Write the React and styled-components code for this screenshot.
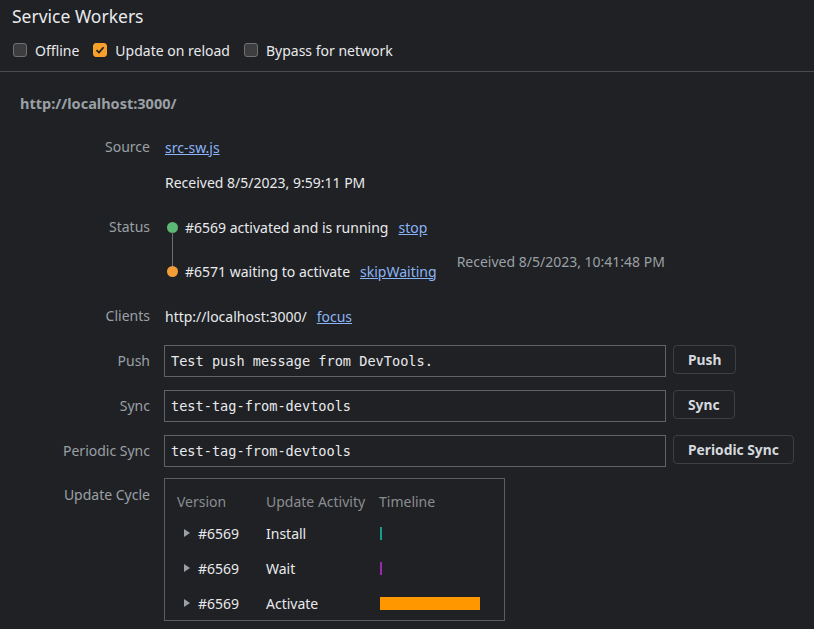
import React from 'react';
import styled, { createGlobalStyle } from 'styled-components';

const Global = createGlobalStyle`
  html, body { margin: 0; padding: 0; background: #202124; }
  body {
    font-family: "Noto Sans", "Open Sans", sans-serif;
    font-size: 14px;
    color: #e8eaed;
  }
  * { box-sizing: border-box; }
`;

const Page = styled.div`
  width: 814px;
  height: 629px;
  overflow: hidden;
  background: #202124;
`;

const Header = styled.header`
  padding: 4px 12px 7px;
`;

const Title = styled.h1`
  margin: 0;
  font-size: 17.5px;
  font-weight: 400;
  line-height: 24px;
  color: #e8eaed;
`;

const Toolbar = styled.div`
  display: flex;
  align-items: center;
  gap: 14px;
  height: 28px;
  margin-top: 8px;
  padding-left: 1px;
`;

const CheckLabel = styled.label`
  display: flex;
  align-items: center;
  gap: 8px;
  color: #e8eaed;
`;

const Box = styled.span`
  width: 14px;
  height: 14px;
  border-radius: 3px;
  display: inline-flex;
  align-items: center;
  justify-content: center;
  background: ${p => (p.$checked ? '#f8a02a' : '#3d3d3f')};
  border: 1px solid ${p => (p.$checked ? '#f8a02a' : '#707070')};
`;

const Divider = styled.div`
  border-top: 1px solid #4a4c50;
`;

const Section = styled.section`
  padding: 0 20px;
`;

const Origin = styled.div`
  margin-top: 21px;
  font-size: 14.5px;
  font-weight: 700;
  line-height: 20px;
  color: #9aa0a6;
`;

const List = styled.div`
  margin-top: 18px;
  display: flex;
  flex-direction: column;
  gap: 13px;
`;

const Row = styled.div`
  display: grid;
  grid-template-columns: 130px 1fr;
  column-gap: 14px;
  align-items: start;
  margin-top: ${p => p.$shift || 0}px;
`;

const Label = styled.div`
  text-align: right;
  line-height: ${p => p.$lh || 32}px;
  color: #9aa0a6;
  white-space: nowrap;
`;

const Lines = styled.div`
  display: flex;
  flex-direction: column;
  gap: ${p => p.$gap}px;
  position: relative;
`;

const Line = styled.div`
  display: flex;
  align-items: center;
  height: 32px;
  padding-left: 1px;
  gap: 10px;
  white-space: nowrap;
`;

const Link = styled.a`
  color: #8ab4f8;
  text-decoration: underline;
  cursor: pointer;
`;

const StatusList = styled(Lines)`
  &::before {
    content: "";
    position: absolute;
    left: 8px;
    top: 21px;
    bottom: 21px;
    border-left: 1px solid #6b6e72;
  }
`;

const StatusLine = styled.div`
  display: flex;
  align-items: center;
  height: 32px;
  white-space: nowrap;
`;

const Dot = styled.span`
  width: 11px;
  height: 11px;
  border-radius: 50%;
  background: ${p => p.$color};
  margin-left: 3px;
  margin-right: 7px;
  flex: none;
`;

const Gap = styled.span`
  width: ${p => p.$w}px;
  flex: none;
`;

const Muted = styled.span`
  color: #9aa0a6;
  align-self: flex-start;
  margin-top: -3px;
`;

const Control = styled.div`
  display: flex;
  align-items: flex-start;
  gap: 7px;
`;

const Input = styled.div`
  width: 502px;
  height: 32px;
  border: 1px solid #5f6368;
  padding: 0 6px;
  display: flex;
  align-items: center;
  font-family: "DejaVu Sans Mono", "Liberation Mono", monospace;
  font-size: 13.6px;
  color: #e8eaed;
  white-space: nowrap;
  background: #202124;
`;

const Button = styled.button`
  height: 29px;
  padding: 0 14px;
  border: 1px solid #3c4043;
  border-radius: 4px;
  background: #202124;
  color: #d5d9df;
  font-family: inherit;
  font-size: 13.8px;
  font-weight: 700;
`;

const Cycle = styled.div`
  width: 341px;
  border: 1px solid #5a5d61;
  padding: 8px 12px 0;
`;

const Grid = styled.div`
  display: grid;
  grid-template-columns: 89px 113px 1fr;
  grid-auto-rows: 35px;
  align-items: center;
  grid-template-rows: 28px;
`;

const Head = styled.div`
  color: #8a8d91;
  white-space: nowrap;
`;

const Cell = styled.div`
  display: flex;
  align-items: center;
  white-space: nowrap;
  padding-top: 1px;
`;

const Tri = styled.span`
  width: 0;
  height: 0;
  border-left: 6px solid #9aa0a6;
  border-top: 4.5px solid transparent;
  border-bottom: 4.5px solid transparent;
  margin: 0 8px 0 7px;
`;

const Bar = styled.span`
  height: 13px;
  width: ${p => p.$w}px;
  background: ${p => p.$color};
  margin-left: 1px;
`;

const Check = () => (
  <svg width="10" height="10" viewBox="0 0 10 10">
    <path d="M1.5 5.2 L4 7.6 L8.6 2.2" fill="none" stroke="#202124" strokeWidth="1.7" />
  </svg>
);

const checks = [
  { label: 'Offline', checked: false },
  { label: 'Update on reload', checked: true },
  { label: 'Bypass for network', checked: false },
];

const inputs = [
  { label: 'Push', value: 'Test push message from DevTools.', button: 'Push' },
  { label: 'Sync', value: 'test-tag-from-devtools', button: 'Sync' },
  { label: 'Periodic Sync', value: 'test-tag-from-devtools', button: 'Periodic Sync' },
];

const cycle = [
  { v: '#6569', a: 'Install', w: 2, c: '#169c8a' },
  { v: '#6569', a: 'Wait', w: 2, c: '#9c27b0' },
  { v: '#6569', a: 'Activate', w: 100, c: '#ff9800' },
];

export default function App() {
  return (
    <Page>
      <Global />
      <Header>
        <Title>Service Workers</Title>
        <Toolbar>
          {checks.map(c => (
            <CheckLabel key={c.label}>
              <Box $checked={c.checked}>{c.checked && <Check />}</Box>
              {c.label}
            </CheckLabel>
          ))}
        </Toolbar>
      </Header>
      <Divider />
      <Section>
        <Origin>http://localhost:3000/</Origin>
        <List>
          <Row>
            <Label>Source</Label>
            <Lines $gap={3}>
              <Line><Link>src-sw.js</Link></Line>
              <Line>Received 8/5/2023, 9:59:11 PM</Line>
            </Lines>
          </Row>
          <Row>
            <Label>Status</Label>
            <StatusList $gap={12}>
              <StatusLine>
                <Dot $color="#5bb974" />
                #6569 activated and is running
                <Gap $w={10} />
                <Link>stop</Link>
              </StatusLine>
              <StatusLine>
                <Dot $color="#f29d38" />
                #6571 waiting to activate
                <Gap $w={10} />
                <Link>skipWaiting</Link>
                <Gap $w={20} />
                <Muted>Received 8/5/2023, 10:41:48 PM</Muted>
              </StatusLine>
            </StatusList>
          </Row>
          <Row>
            <Label>Clients</Label>
            <Line>
              http://localhost:3000/
              <Link>focus</Link>
            </Line>
          </Row>
          {inputs.map(i => (
            <Row key={i.label}>
              <Label>{i.label}</Label>
              <Control>
                <Input>{i.value}</Input>
                <Button>{i.button}</Button>
              </Control>
            </Row>
          ))}
          <Row $shift={-2}>
            <Label $lh={34}>Update Cycle</Label>
            <Cycle>
              <Grid>
                <Head>Version</Head>
                <Head>Update Activity</Head>
                <Head>Timeline</Head>
                {cycle.map((r, idx) => (
                  <React.Fragment key={idx}>
                    <Cell><Tri />{r.v}</Cell>
                    <Cell>{r.a}</Cell>
                    <Cell><Bar $w={r.w} $color={r.c} /></Cell>
                  </React.Fragment>
                ))}
              </Grid>
            </Cycle>
          </Row>
        </List>
      </Section>
    </Page>
  );
}
